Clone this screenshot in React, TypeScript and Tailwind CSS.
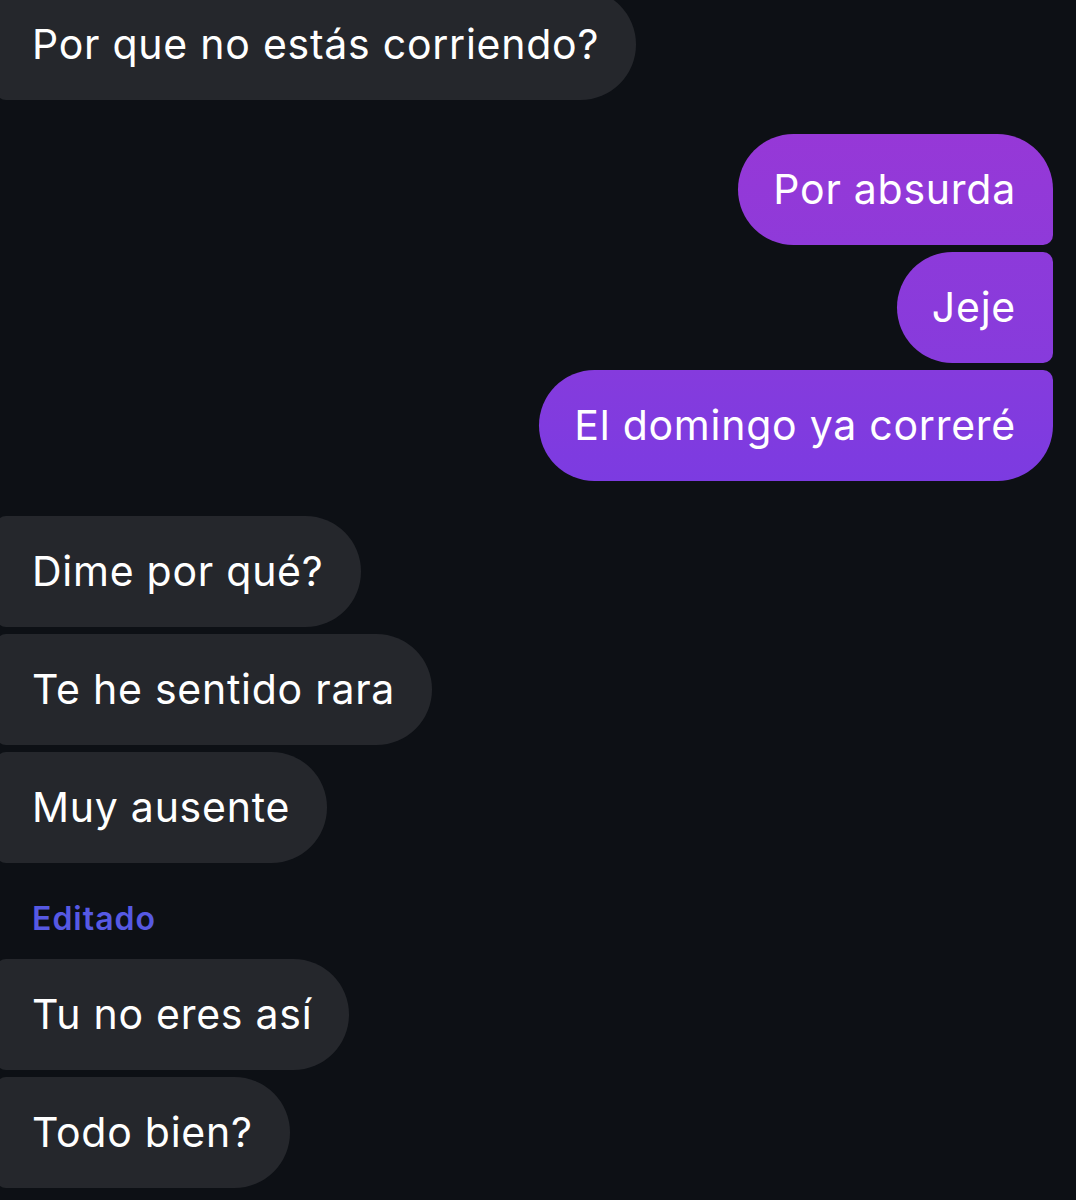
import React from 'react';

type Msg = { text: string; className: string };

const font = { fontFamily: 'Inter, "Noto Sans", sans-serif' };

const Incoming = ({ text, className = '' }: { text: string; className?: string }) => (
  <div className={`self-start ml-[-4px] h-[111px] flex items-center pl-9 pr-[37px] bg-[#25272c] text-white text-[41px] leading-none tracking-[0.75px] rounded-l-[10px] rounded-r-[56px] ${className}`}>
    {text}
  </div>
);

const Outgoing = ({ text, className = '' }: { text: string; className?: string }) => (
  <div className={`self-end mr-[23px] h-[111px] flex items-center pl-[35px] pr-[37px] text-white text-[41px] leading-none tracking-[0.75px] rounded-l-[56px] ${className}`}>
    {text}
  </div>
);

const sent: Msg[] = [
  { text: 'Por absurda', className: 'bg-gradient-to-b from-[#9638d7] to-[#8f3ad9] rounded-tr-[56px] rounded-br-[10px]' },
  { text: 'Jeje', className: 'bg-gradient-to-b from-[#8d3ada] to-[#873bdc] rounded-r-[10px]' },
  { text: 'El domingo ya correré', className: 'bg-gradient-to-b from-[#853bdd] to-[#7c3be1] rounded-tr-[10px] rounded-br-[56px]' },
];

export default function App() {
  return (
    <div className="w-[1076px] h-[1200px] overflow-hidden bg-[#0d1015]" style={font}>
      <div className="flex flex-col mt-[-11px]">
        <Incoming text="Por que no estás corriendo?" />

        <div className="flex flex-col gap-[7px] mt-[34px]">
          {sent.map(m => (
            <Outgoing key={m.text} text={m.text} className={m.className} />
          ))}
        </div>

        <div className="flex flex-col gap-[7px] mt-[35px]">
          <Incoming text="Dime por qué?" />
          <Incoming text="Te he sentido rara" />
          <Incoming text="Muy ausente" />
        </div>

        <div className="mt-9 mb-5 pl-8 h-10 flex items-center text-[32px] tracking-[1px] font-semibold text-[#5659e3]">
          Editado
        </div>

        <div className="flex flex-col gap-[7px]">
          <Incoming text="Tu no eres así" />
          <Incoming text="Todo bien?" />
        </div>
      </div>
    </div>
  );
}
